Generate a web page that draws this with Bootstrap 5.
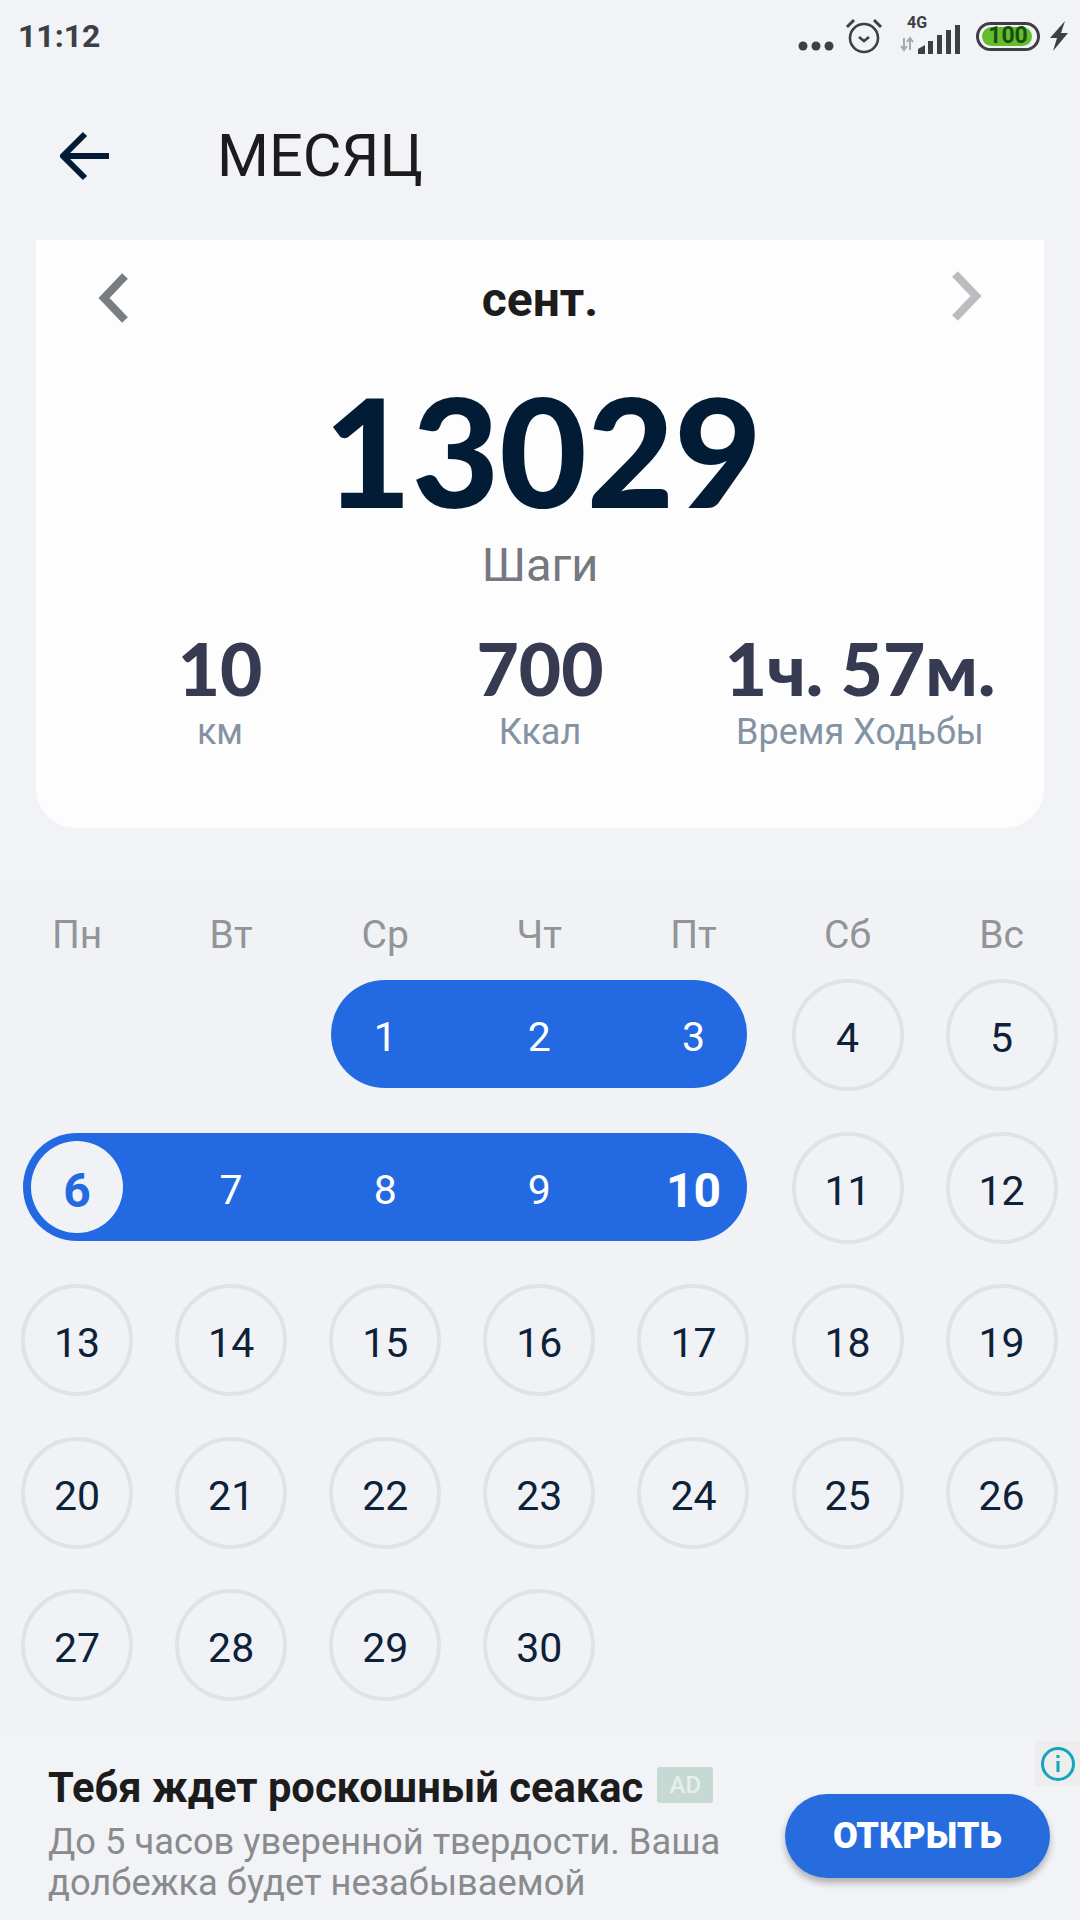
<!DOCTYPE html>
<html lang="ru">
<head>
    <meta charset="UTF-8">
    <meta name="viewport" content="width=device-width, initial-scale=1.0">
    <title>Месяц</title>
    <link href="https://cdn.jsdelivr.net/npm/bootstrap@5.3.0/dist/css/bootstrap.min.css" rel="stylesheet">
    <style>
        body { background: #f1f3f7; font-family: Roboto, "Noto Sans", sans-serif; width: 1080px; height: 1920px; overflow: hidden; }
        .status-bar { height: 72px; padding: 0 10px 0 18px; }
        .status-time { font-size: 32px; font-weight: 700; color: #3c3f43; }
        .top-bar { height: 168px; padding-left: 60px; }
        .top-title { font-size: 59.5px; font-weight: 400; color: #1c1c1c; margin: 2px 0 0 107px; line-height: 1; }
        .month-card { margin: 0 36px; height: 588px; background: #fdfdfe; border-radius: 0 0 40px 40px; padding: 0 24px; }
        .month-nav { height: 120px; padding: 0 38px; }
        .month-name { font-size: 48px; font-weight: 700; color: #1c1c1c; }
        .steps { font-family: Lato, sans-serif; font-weight: 900; font-size: 151px; line-height: 140px; color: #021c36; margin-top: 20px; padding-left: 6px; }
        .steps-label { font-size: 47px; line-height: 60px; color: #74787f; margin-top: 15px; margin-bottom: 33px; }
        .stat-num { font-family: Lato, sans-serif; font-weight: 900; font-size: 73px; line-height: 80px; color: #363b52; }
        .stat-label { font-size: 36px; line-height: 44px; color: #8493a3; margin-top: 2px; }
        .calendar { background: #f0f2f6; margin-top: 48px; padding-top: 34px; height: 864px; }
        .week-head { display: grid; grid-template-columns: repeat(7, 154.1px); font-size: 39px; line-height: 50px; color: #929496; margin-bottom: 19px; }
        .day-grid { display: grid; grid-template-columns: repeat(7, 154.1px); grid-auto-rows: 112px; row-gap: 40.5px; }
        .day-cell { width: 112px; height: 112px; margin: 0 auto; padding-top: 8px; border: 4px solid #e0e2e6; border-radius: 50%; font-size: 41px; color: #0d2138; }
        .day-range { margin: 1px 23px 3px; height: 108px; background: #236ae2; border-radius: 54px; color: #fff; font-size: 41px; }
        .range-day { width: 108px; height: 108px; padding-top: 8px; }
        .range-end { font-weight: 700; font-size: 48px; }
        .range-today { width: 92px; height: 92px; margin: 8px; padding-top: 8px; background: #f0f2f6; color: #236ae2; font-weight: 700; font-size: 48px; border-radius: 50%; }
        .ad-block { height: 180px; padding: 26px 30px 0 48px; }
        .ad-title { font-size: 41.7px; font-weight: 700; line-height: 44px; color: #1c1c1c; }
        .ad-tag { width: 56px; height: 36px; background: #c6d9d2; color: #e6efec; font-size: 24px; font-weight: 500; margin: -6px 0 0 14px; border-radius: 3px; }
        .ad-text { font-size: 36.3px; line-height: 41px; color: #8a8b8d; width: 700px; margin-top: 11px; }
        .ad-btn { width: 265px; height: 84px; margin-top: 28px; background: #266cdf; border: 0; border-radius: 42px; color: #fff; font-size: 36px; font-weight: 900; box-shadow: 0 5px 7px rgba(0,0,0,.28); }
        .ad-info { position: absolute; right: 0; top: 1741px; width: 45px; height: 45px; background: #ededee; }
    </style>
</head>
<body class="position-relative">
    <div class="status-bar d-flex align-items-center justify-content-between">
        <span class="status-time">11:12</span>
        <div class="d-flex align-items-center">
            <svg width="36" height="40" viewBox="0 0 36 40" style="margin-top:10px"><g fill="#3c3f43"><circle cx="5" cy="25" r="4.5"/><circle cx="18" cy="25" r="4.5"/><circle cx="31" cy="25" r="4.5"/></g></svg>
            <svg style="margin-left:11px" width="38" height="40" viewBox="0 0 38 40" fill="none" stroke="#3c3f43" stroke-width="2.6"><circle cx="19" cy="22" r="14"/><path d="M14 21l5 4 5-4"/><path d="M2 11l7-7M36 11l-7-7" stroke-width="3"/></svg>
            <div class="position-relative" style="width:62px;height:40px;margin-left:17px">
                <span class="position-absolute fw-bold" style="left:7px;top:-1px;font-size:16px;line-height:16px;color:#3c3f43">4G</span>
                <svg class="position-absolute" style="left:0;top:0" width="62" height="40" viewBox="0 0 62 40"><path d="M4 22v12M1 30l3 4 3-4M10 34V22M7 26l3-4 3 4" fill="none" stroke="#a6a8ab" stroke-width="2"/><path d="M18 38v-5l7-4v9zM28 38V25h5v13zM37 38V19h5v19zM46 38V14h5v24zM55 38V9h5v29z" fill="#3c3f43"/></svg>
            </div>
            <div class="position-relative d-flex align-items-center justify-content-center" style="width:64px;height:29px;margin-left:14px;border:3.5px solid #3c3f43;border-radius:15px">
                <span class="position-absolute" style="left:3px;top:2px;bottom:2px;right:5px;background:#63bd2c;border-radius:10px"></span>
                <span class="position-relative fw-bold" style="font-size:23px;line-height:22px;color:#1b4d10">100</span>
            </div>
            <svg class="ms-2" width="22" height="30" viewBox="0 0 22 30"><path d="M17 0L2 17h7L5 30l15-18h-7z" fill="#3c3f43"/></svg>
        </div>
    </div>

    <div class="top-bar d-flex align-items-center">
        <svg width="50" height="50" viewBox="0 0 50 50" fill="none" stroke="#021c36" stroke-width="6"><path d="M49 25H4M25 3L3 25l22 22"/></svg>
        <h1 class="top-title">МЕСЯЦ</h1>
    </div>

    <div class="month-card text-center">
        <div class="month-nav d-flex align-items-center justify-content-between">
            <svg class="mb-1" width="32" height="50" viewBox="0 0 32 50" fill="none" stroke="#7a7d80" stroke-width="8"><path d="M27 3L6 25l21 22"/></svg>
            <span class="month-name">сент.</span>
            <svg class="mb-2" width="32" height="50" viewBox="0 0 32 50" fill="none" stroke="#bbbcbf" stroke-width="8"><path d="M5 3l21 22L5 47"/></svg>
        </div>
        <div class="steps">13029</div>
        <div class="steps-label">Шаги</div>
        <div class="row g-0">
            <div class="col-4"><div class="stat-num">10</div><div class="stat-label">км</div></div>
            <div class="col-4"><div class="stat-num">700</div><div class="stat-label">Ккал</div></div>
            <div class="col-4"><div class="stat-num">1ч. 57м.</div><div class="stat-label">Время Ходьбы</div></div>
        </div>
    </div>

    <div class="calendar">
        <div class="week-head text-center">
            <span>Пн</span><span>Вт</span><span>Ср</span><span>Чт</span><span>Пт</span><span>Сб</span><span>Вс</span>
        </div>
        <div class="day-grid">
            <div class="day-range d-flex justify-content-between" style="grid-column: 3 / span 3">
                <span class="range-day d-flex align-items-center justify-content-center">1</span>
                <span class="range-day d-flex align-items-center justify-content-center">2</span>
                <span class="range-day d-flex align-items-center justify-content-center">3</span>
            </div>
            <div class="day-cell d-flex align-items-center justify-content-center">4</div>
            <div class="day-cell d-flex align-items-center justify-content-center">5</div>
            <div class="day-range d-flex justify-content-between" style="grid-column: 1 / span 5">
                <span class="range-today d-flex align-items-center justify-content-center">6</span>
                <span class="range-day d-flex align-items-center justify-content-center">7</span>
                <span class="range-day d-flex align-items-center justify-content-center">8</span>
                <span class="range-day d-flex align-items-center justify-content-center">9</span>
                <span class="range-day range-end d-flex align-items-center justify-content-center">10</span>
            </div>
            <div class="day-cell d-flex align-items-center justify-content-center">11</div>
            <div class="day-cell d-flex align-items-center justify-content-center">12</div>
            <div class="day-cell d-flex align-items-center justify-content-center">13</div>
            <div class="day-cell d-flex align-items-center justify-content-center">14</div>
            <div class="day-cell d-flex align-items-center justify-content-center">15</div>
            <div class="day-cell d-flex align-items-center justify-content-center">16</div>
            <div class="day-cell d-flex align-items-center justify-content-center">17</div>
            <div class="day-cell d-flex align-items-center justify-content-center">18</div>
            <div class="day-cell d-flex align-items-center justify-content-center">19</div>
            <div class="day-cell d-flex align-items-center justify-content-center">20</div>
            <div class="day-cell d-flex align-items-center justify-content-center">21</div>
            <div class="day-cell d-flex align-items-center justify-content-center">22</div>
            <div class="day-cell d-flex align-items-center justify-content-center">23</div>
            <div class="day-cell d-flex align-items-center justify-content-center">24</div>
            <div class="day-cell d-flex align-items-center justify-content-center">25</div>
            <div class="day-cell d-flex align-items-center justify-content-center">26</div>
            <div class="day-cell d-flex align-items-center justify-content-center">27</div>
            <div class="day-cell d-flex align-items-center justify-content-center">28</div>
            <div class="day-cell d-flex align-items-center justify-content-center">29</div>
            <div class="day-cell d-flex align-items-center justify-content-center">30</div>
        </div>
    </div>

    <div class="ad-block d-flex justify-content-between">
        <div>
            <div class="d-flex align-items-center">
                <span class="ad-title">Тебя ждет роскошный сеакас</span>
                <span class="ad-tag d-flex align-items-center justify-content-center">AD</span>
            </div>
            <div class="ad-text">До 5 часов уверенной твердости. Ваша долбежка будет незабываемой</div>
        </div>
        <button class="btn ad-btn" type="button">ОТКРЫТЬ</button>
    </div>
    <div class="ad-info d-flex align-items-center justify-content-center">
        <svg width="36" height="36" viewBox="0 0 36 36" fill="none" stroke="#12a5bd" stroke-width="3"><circle cx="18" cy="18" r="15.5"/><path d="M18 15v11M18 9v3"/></svg>
    </div>

    <script src="https://cdn.jsdelivr.net/npm/bootstrap@5.3.0/dist/js/bootstrap.bundle.min.js"></script>
</body>
</html>
